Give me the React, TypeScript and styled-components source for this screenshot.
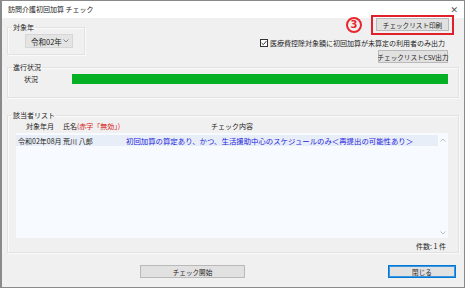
import React from "react";
import styled, { createGlobalStyle } from "styled-components";

const Global = createGlobalStyle`
  html, body { margin: 0; padding: 0; background: #ffffff; }
  body {
    font-family: "Noto Sans CJK JP", "Noto Sans", sans-serif;
    font-size: 7px;
    color: #111;
  }
  * { box-sizing: border-box; }
`;

const Window = styled.div`
  width: 465px;
  height: 288px;
  display: flex;
  flex-direction: column;
  border: 1px solid #8a8a8a;
  border-left: 2px solid #8a8a8a;
  background: #f0f0f0;
  overflow: hidden;
`;

const TitleBar = styled.div`
  height: 17px;
  flex-shrink: 0;
  background: #ffffff;
  display: flex;
  align-items: center;
  justify-content: space-between;
  padding: 0 6px 0 6px;
`;

const Title = styled.span`
  font-size: 7px;
  line-height: 9px;
  color: #222;
`;

const Close = styled.span`
  font-family: "DejaVu Sans", sans-serif;
  font-size: 9px;
  color: #555;
`;

const Body = styled.div`
  flex: 1;
  display: flex;
  flex-direction: column;
  padding: 0 5px 0 5px;
`;

const TopRow = styled.div`
  display: flex;
  align-items: flex-start;
  justify-content: space-between;
  height: 45px;
`;

const Group = styled.fieldset<{ $w?: number; $h: number; $mt?: number }>`
  margin: ${(p) => p.$mt ?? 0}px 0 0 0;
  padding: 0;
  min-width: 0;
  width: ${(p) => (p.$w ? `${p.$w}px` : "auto")};
  height: ${(p) => p.$h}px;
  border: 1px solid #e2e2e2;
  box-shadow: inset 1px 1px 0 #fafafa, 1px 1px 0 #fafafa;
  display: flex;
  flex-direction: column;
`;

const Legend = styled.legend`
  font-size: 7px;
  line-height: 9px;
  padding: 0 1px;
  margin-left: 4px;
  color: #222;
`;

const Select = styled.div`
  margin: 2px 0 0 17px;
  width: 48px;
  height: 14px;
  background: #e4e4e4;
  border: 1px solid #d6d6d6;
  display: flex;
  align-items: center;
  justify-content: space-between;
  padding: 0 3px 0 5px;
  font-size: 7.5px;
  color: #222;
`;

const RightCol = styled.div`
  display: flex;
  flex-direction: column;
  align-items: flex-end;
  margin-top: -3px;
  padding-right: 5px;
`;

const PrintRow = styled.div`
  display: flex;
  align-items: center;
`;

const Marker = styled.span`
  width: 16px;
  height: 16px;
  border: 2px solid #e8262d;
  border-radius: 50%;
  display: flex;
  align-items: center;
  justify-content: center;
  font-family: "DejaVu Sans", sans-serif;
  font-size: 10px;
  font-weight: bold;
  color: #e8262d;
  line-height: 10px;
  margin-right: 9px;
`;

const RedBox = styled.div`
  border: 2px solid #e0202a;
  padding: 1px 3px 2px 3px;
  display: flex;
`;

const Button = styled.div<{ $w: number; $default?: boolean }>`
  width: ${(p) => p.$w}px;
  height: 13px;
  background: #e1e1e1;
  border: 1px solid ${(p) => (p.$default ? "#0078d7" : "#b9b9b9")};
  box-shadow: ${(p) => (p.$default ? "inset 0 0 0 1px #3d95de" : "none")};
  display: flex;
  align-items: center;
  justify-content: center;
  font-size: 6.6px;
  color: #222;
  white-space: nowrap;
`;

const CheckRow = styled.label`
  display: flex;
  align-items: center;
  margin-top: 3px;
  margin-right: 9px;
  font-size: 7px;
  line-height: 10px;
  color: #222;
`;

const CheckBox = styled.span`
  width: 8px;
  height: 8px;
  border: 1px solid #333;
  background: #fff;
  margin-right: 2px;
  display: flex;
  align-items: center;
  justify-content: center;
`;

const CsvWrap = styled.div`
  margin-top: 2px;
  margin-right: 6px;
`;

const ProgressRow = styled.div`
  display: flex;
  align-items: center;
  padding: 2px 10px 0 16px;
`;

const ProgressLabel = styled.span`
  width: 48px;
  font-size: 7px;
  color: #222;
`;

const Bar = styled.div`
  flex: 1;
  height: 10px;
  background: #06b025;
`;

const ListHeader = styled.div`
  display: flex;
  align-items: center;
  height: 12px;
  padding-left: 18px;
  font-size: 7px;
  color: #222;
`;

const HeadCell = styled.span<{ $w?: number; $color?: string }>`
  width: ${(p) => (p.$w ? `${p.$w}px` : "auto")};
  color: ${(p) => p.$color ?? "#222"};
  white-space: nowrap;
`;

const ListBox = styled.div`
  margin: 1px 10px 0 8px;
  height: 105px;
  background: #f7fafe;
  display: flex;
`;

const Rows = styled.div`
  flex: 1;
  padding-top: 2px;
`;

const Row = styled.div`
  height: 11px;
  display: flex;
  align-items: center;
  background: #e8eef7;
  padding-left: 2px;
  font-size: 7px;
  white-space: nowrap;
`;

const RowName = styled.span`
  width: 108px;
  color: #222;
`;

const RowText = styled.span`
  color: #1c1ce0;
  font-size: 7.4px;
  font-weight: 400;
`;

const Scroll = styled.div`
  width: 10px;
  display: flex;
  flex-direction: column;
  justify-content: space-between;
  align-items: center;
  padding: 5px 0 3px;
`;

const CountRow = styled.div`
  display: flex;
  justify-content: flex-end;
  padding: 3px 12px 0 0;
  font-size: 7px;
  color: #222;
`;

const Footer = styled.div`
  display: flex;
  align-items: center;
  padding-top: 12px;
`;

const StartWrap = styled.div`
  margin-left: 133px;
`;

const CloseWrap = styled.div`
  margin-left: auto;
  margin-right: 3px;
`;

const Chevron = ({ up, color = "#b8b8b8" }: { up?: boolean; color?: string }) => (
  <svg width="6" height="4" viewBox="0 0 6 4">
    <path
      d={up ? "M0.5 3.5 L3 1 L5.5 3.5" : "M0.5 0.5 L3 3 L5.5 0.5"}
      fill="none"
      stroke={color}
      strokeWidth="0.9"
    />
  </svg>
);

export default function App() {
  return (
    <>
      <Global />
      <Window>
        <TitleBar>
          <Title>訪問介護初回加算 チェック</Title>
          <Close>✕</Close>
        </TitleBar>
        <Body>
          <TopRow>
            <Group $w={78} $h={32} $mt={5}>
              <Legend>対象年</Legend>
              <Select>
                <span>令和02年</span>
                <Chevron color="#7a7a7a" />
              </Select>
            </Group>
            <RightCol>
              <PrintRow>
                <Marker>3</Marker>
                <RedBox>
                  <Button $w={73}>チェックリスト印刷</Button>
                </RedBox>
              </PrintRow>
              <CheckRow>
                <CheckBox>
                  <svg width="6" height="6" viewBox="0 0 6 6">
                    <path d="M0.6 3 L2.3 4.7 L5.4 1.1" fill="none" stroke="#222" strokeWidth="0.9" />
                  </svg>
                </CheckBox>
                医療費控除対象額に初回加算が未算定の利用者のみ出力
              </CheckRow>
              <CsvWrap>
                <Button $w={70}>チェックリストCSV出力</Button>
              </CsvWrap>
            </RightCol>
          </TopRow>
          <Group $h={35}>
            <Legend>進行状況</Legend>
            <ProgressRow>
              <ProgressLabel>状況</ProgressLabel>
              <Bar />
            </ProgressRow>
          </Group>
          <Group $h={142} $mt={13}>
            <Legend>該当者リスト</Legend>
            <ListHeader>
              <HeadCell $w={37}>対象年月</HeadCell>
              <HeadCell>氏名</HeadCell>
              <HeadCell $w={134} $color="#d42020">(赤字「無効」)</HeadCell>
              <HeadCell>チェック内容</HeadCell>
            </ListHeader>
            <ListBox>
              <Rows>
                <Row>
                  <RowName>令和02年08月 荒川 八郎</RowName>
                  <RowText>初回加算の算定あり、かつ、生活援助中心のスケジュールのみ＜再提出の可能性あり＞</RowText>
                </Row>
              </Rows>
              <Scroll>
                <Chevron up />
                <Chevron />
              </Scroll>
            </ListBox>
            <CountRow>件数: 1 件</CountRow>
          </Group>
          <Footer>
            <StartWrap>
              <Button $w={105}>チェック開始</Button>
            </StartWrap>
            <CloseWrap>
              <Button $w={68} $default>閉じる</Button>
            </CloseWrap>
          </Footer>
        </Body>
      </Window>
    </>
  );
}
